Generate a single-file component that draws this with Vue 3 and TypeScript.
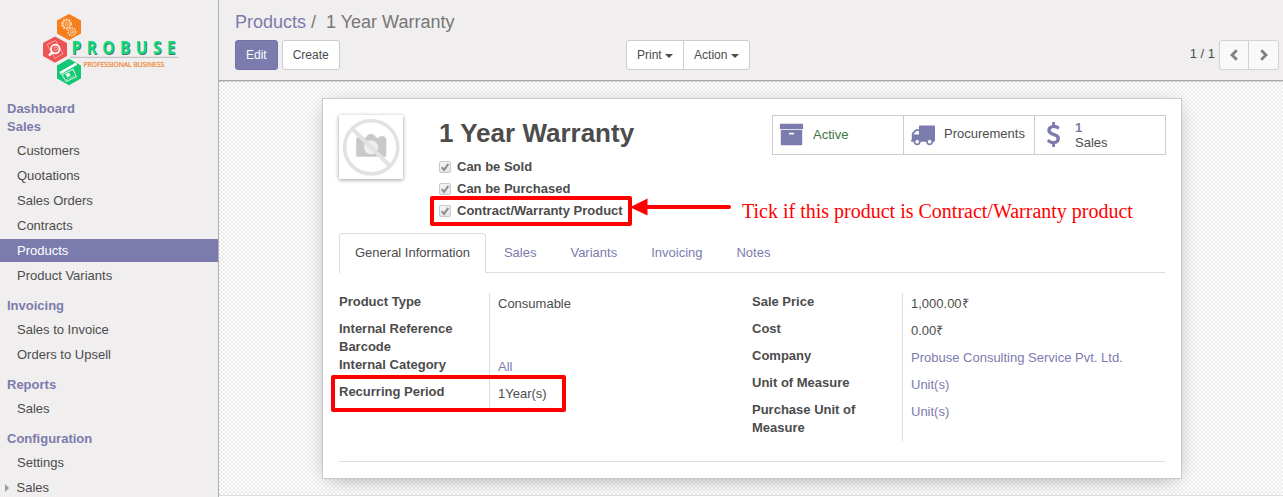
<script setup lang="ts">
interface MenuItem {
  label: string
  active?: boolean
  collapsed?: boolean
}
interface MenuSection {
  title: string
  items: MenuItem[]
}
interface Field {
  label: string
  value?: string
  link?: boolean
  tight?: boolean
}

const menu: MenuSection[] = [
  { title: 'Dashboard', items: [] },
  {
    title: 'Sales',
    items: [
      { label: 'Customers' },
      { label: 'Quotations' },
      { label: 'Sales Orders' },
      { label: 'Contracts' },
      { label: 'Products', active: true },
      { label: 'Product Variants' },
    ],
  },
  { title: 'Invoicing', items: [{ label: 'Sales to Invoice' }, { label: 'Orders to Upsell' }] },
  { title: 'Reports', items: [{ label: 'Sales' }] },
  { title: 'Configuration', items: [{ label: 'Settings' }, { label: 'Sales', collapsed: true }] },
]

const options = ['Can be Sold', 'Can be Purchased', 'Contract/Warranty Product']
const tabs = ['General Information', 'Sales', 'Variants', 'Invoicing', 'Notes']

const groups: Field[][] = [
  [
    { label: 'Product Type', value: 'Consumable' },
    { label: 'Internal Reference', tight: true },
    { label: 'Barcode', tight: true },
    { label: 'Internal Category', value: 'All', link: true },
    { label: 'Recurring Period', value: '1Year(s)' },
  ],
  [
    { label: 'Sale Price', value: '1,000.00₹' },
    { label: 'Cost', value: '0.00₹' },
    { label: 'Company', value: 'Probuse Consulting Service Pvt. Ltd.', link: true },
    { label: 'Unit of Measure', value: 'Unit(s)', link: true },
    { label: 'Purchase Unit of Measure', value: 'Unit(s)', link: true },
  ],
]

const archivePath =
  'M1088 832q0-26-19-45t-45-19h-256q-26 0-45 19t-19 45 19 45 45 19h256q26 0 45-19t19-45zm576-192v960q0 26-19 45t-45 19h-1408q-26 0-45-19t-19-45v-960q0-26 19-45t45-19h1408q26 0 45 19t19 45zm64-448v256q0 26-19 45t-45 19h-1536q-26 0-45-19t-19-45v-256q0-26 19-45t45-19h1536q26 0 45 19t19 45z'
const truckPath =
  'M640 1408q0-52-38-90t-90-38-90 38-38 90 38 90 90 38 90-38 38-90zm-384-512h384v-256h-158q-13 0-22 9l-195 195q-9 9-9 22v30zm1280 512q0-52-38-90t-90-38-90 38-38 90 38 90 90 38 90-38 38-90zm256-1088v1024q0 15-4 26.5t-13.5 18.5-16.5 11.5-23.5 6-22.5 2-25.5 0-22.5-.5q0 106-75 181t-181 75-181-75-75-181h-384q0 106-75 181t-181 75-181-75-75-181h-64q-3 0-22.5.5t-25.5 0-22.5-2-23.5-6-16.5-11.5-13.5-18.5-4-26.5q0-26 19-45t45-19v-320q0-8-.5-35t0-38 2.5-34.5 6.5-37 14-30.5 22.5-30l198-198q19-19 50.5-32t58.5-13h160v-192q0-26 19-45t45-19h1024q26 0 45 19t19 45z'
const dollarPath =
  'M1362 1185q0 153-99.5 263.5t-258.5 136.5v175q0 14-9 23t-23 9h-135q-13 0-22.5-9.5t-9.5-22.5v-175q-66-9-127.5-31t-101.5-44.5-74-48-46.5-37.5-17.5-18q-17-21-2-41l103-135q7-10 23-12 15-2 24 9l2 2q113 99 243 125 37 8 74 8 81 0 142.5-43t61.5-122q0-28-15-53t-33.5-42-58.5-37.5-66-32-80-32.5q-39-16-61.5-25t-61.5-26.5-62.5-31-56.5-35.5-53.5-42.5-43.5-49-35.5-58-21-66.5-8.5-78q0-138 98-242t255-134v-180q0-13 9.5-22.5t22.5-9.5h135q14 0 23 9t9 23v176q57 6 110.5 23t87 33.5 63.5 37.5 39 29 15 14q17 18 5 38l-81 146q-8 15-23 16-14 3-27-7-3-3-14.5-12t-39-26.5-58.5-32-74.5-26-85.5-11.5q-95 0-155 43t-60 111q0 26 8.5 48t29.5 41.5 39.5 33 56 31 60.5 27 70 27.5q53 20 81 31.5t76 35 75.5 42.5 62 50 53 63.5 31.5 76.5 13 94z'
</script>

<template>
  <div class="app">
    <aside class="sidebar">
      <svg class="logo" width="218" height="99" viewBox="0 0 218 99">
        <polygon points="69,14 81,20.5 81,33.5 69,40.3 57,33.5 57,20.5" fill="#f47f1c" />
        <polygon points="55,36.5 67,43 67,56 55,62.8 43,56 43,43" fill="#ee5454" />
        <polygon points="69,58.8 81,65.5 81,78.5 69,85.3 57,78.5 57,65.5" fill="#13c873" />
        <g fill="none" stroke="#fcd9b8">
          <circle cx="66.6" cy="24" r="4.6" stroke-width="1.8" stroke-dasharray="1.8 1.1" />
          <circle cx="66.6" cy="24" r="3.6" stroke-width="0.8" />
          <circle cx="66.6" cy="24" r="1.5" stroke-width="0.9" />
          <circle cx="71.8" cy="31.8" r="3.7" stroke-width="1.6" stroke-dasharray="1.5 0.9" />
          <circle cx="71.8" cy="31.8" r="1.5" stroke-width="1" />
        </g>
        <path d="M47 44.5l8.5-4 7.5 13-8 5z" fill="none" stroke="#f7a9a6" stroke-width="0.9" />
        <circle cx="55.3" cy="49" r="4.3" fill="#ee5454" stroke="#fff" stroke-width="1.7" />
        <circle cx="55.8" cy="48.6" r="1.8" fill="none" stroke="#f9b9b5" stroke-width="1" />
        <path d="M52.3 52.3l-3.4 3.2" stroke="#fff" stroke-width="2.4" />
        <path d="M60 73.2l16.5-9.5" stroke="#fff" stroke-width="2.6" />
        <path d="M62 74.8l11-5.5 3.3 7.4-10 4.8z" fill="none" stroke="#c7f2dd" stroke-width="1.1" />
        <path d="M65.5 74.2l3.6-1.8 1.6 3.2-3.6 1.8z" fill="#d8f7e8" />
        <path d="M66.5 79.5l7.5-3.6" stroke="#a8ebcb" stroke-width="0.8" />
        <path d="M70 57.3h108" stroke="#b9b7b7" stroke-width="1" />
        <g transform="translate(71.5 54) scale(0.84 1)">
          <text class="brand shade" x="0.8" y="1" textLength="124">PROBUSE</text>
          <text class="brand" x="0" y="0" textLength="124">PROBUSE</text>
        </g>
        <text class="tagline" x="83.5" y="67" textLength="81" lengthAdjust="spacingAndGlyphs">PROFESSIONAL BUSINESS</text>
      </svg>
      <nav class="menu">
        <section v-for="section in menu" :key="section.title" class="section">
          <div class="section-title">{{ section.title }}</div>
          <ul v-if="section.items.length" class="items">
            <li v-for="item in section.items" :key="item.label" :class="{ active: item.active, collapsed: item.collapsed }">
              {{ item.label }}
            </li>
          </ul>
        </section>
      </nav>
    </aside>

    <main class="main">
      <header class="control-panel">
        <div class="breadcrumb"><a>Products</a><span class="slash">/</span><span>1 Year Warranty</span></div>
        <div class="toolbar">
          <div class="left-buttons">
            <button class="btn primary">Edit</button>
            <button class="btn">Create</button>
          </div>
          <div class="btn-group">
            <button class="btn">Print<i class="caret"></i></button>
            <button class="btn">Action<i class="caret"></i></button>
          </div>
          <div class="pager">
            <span>1 / 1</span>
            <div class="btn-group pager-buttons">
              <button class="btn">
                <svg width="10" height="12" viewBox="0 0 10 12"><path d="M7.8 1.2L3 6l4.8 4.8" /></svg>
              </button>
              <button class="btn">
                <svg width="10" height="12" viewBox="0 0 10 12"><path d="M2.2 1.2L7 6l-4.8 4.8" /></svg>
              </button>
            </div>
          </div>
        </div>
      </header>

      <div class="canvas">
        <article class="sheet">
          <div class="head">
            <div class="avatar">
              <svg width="64" height="64" viewBox="0 0 64 64">
                <path d="M18.5 22.5h1v-1.3h3v1.3h4.5c1-2.6 2.7-3.6 5-3.6s4 1 5 3.6h3.5v-1.3h5v1.3h.5q1.3 0 1.3 1.3v16.7q0 1.3-1.3 1.3h-27.5q-1.3 0-1.3-1.3V23.8q0-1.3 1.3-1.3z" fill="#c9c9c9" />
                <circle cx="32" cy="32.3" r="7" fill="#eee" />
                <path d="M13 13.5l37.5 37" stroke="#e2e2e2" stroke-width="4" />
                <circle cx="32.2" cy="32.3" r="26.6" fill="none" stroke="#e2e2e2" stroke-width="3.6" />
              </svg>
            </div>
            <div class="title">
              <h1>1 Year Warranty</h1>
              <div v-for="option in options" :key="option" class="option">
                <span class="check">
                  <svg width="12" height="12" viewBox="0 0 12 12"><path d="M2.7 6.2l2.4 2.6 4.3-6" /></svg>
                </span>
                <span>{{ option }}</span>
              </div>
            </div>
            <div class="stats">
              <div class="stat">
                <svg width="25" height="25" viewBox="0 0 1792 1792"><path :d="archivePath" /></svg>
                <span class="green">Active</span>
              </div>
              <div class="stat">
                <svg width="25" height="25" viewBox="0 0 1792 1792"><path :d="truckPath" /></svg>
                <span class="procurements">Procurements</span>
              </div>
              <div class="stat">
                <svg width="25" height="25" viewBox="0 0 1792 1792"><path :d="dollarPath" /></svg>
                <span class="counter"><b>1</b>Sales</span>
              </div>
            </div>
          </div>

          <div class="tabs">
            <a v-for="(tab, i) in tabs" :key="tab" class="tab" :class="{ current: i === 0 }">{{ tab }}</a>
          </div>

          <div class="groups">
            <dl v-for="(fields, g) in groups" :key="g" class="group">
              <div v-for="field in fields" :key="field.label" class="field" :class="{ tight: field.tight }">
                <dt>{{ field.label }}</dt>
                <dd :class="{ link: field.link }">{{ field.value }}</dd>
              </div>
            </dl>
          </div>
          <div class="rule"></div>
        </article>
      </div>
      <div class="footer-edge"></div>
    </main>

    <div class="mark mark-option"></div>
    <div class="mark mark-period"></div>
    <svg class="arrow" width="102" height="18" viewBox="0 0 102 18">
      <path d="M16 9h83" stroke="#f00" stroke-width="4" stroke-linecap="round" />
      <path d="M0 9.3L17.5 0.5v17z" fill="#f00" />
    </svg>
    <div class="note">Tick if this product is Contract/Warranty product</div>
  </div>
</template>

<style>
body {
  margin: 0;
  overflow: hidden;
}
</style>

<style scoped>
.app {
  position: relative;
  display: flex;
  width: 1283px;
  height: 497px;
  overflow: hidden;
  font: 13px/18px "Liberation Sans", Arial, sans-serif;
  color: #4c4c4c;
  background: #fff;
}
.sidebar {
  box-sizing: border-box;
  width: 219px;
  flex: none;
  overflow: hidden;
  background: #f0eeee;
  border-right: 1px solid #afafb6;
}
.logo {
  display: block;
}
.brand {
  font: bold 18.5px "Open Sans", "Noto Sans", sans-serif;
  fill: #12d87d;
}
.brand.shade {
  fill: #4f7864;
}
.tagline {
  font: 7.6px "Open Sans", "Noto Sans", sans-serif;
  fill: #ee7f22;
  stroke: #ee7f22;
  stroke-width: 0.2px;
}
.section + .section {
  margin-top: 9px;
}
.section:nth-child(2) {
  margin-top: 0;
}
.menu {
  padding-top: 1px;
}
.section-title {
  padding-left: 7px;
  font-weight: bold;
  color: #7c7bad;
}
.items {
  display: flex;
  flex-direction: column;
  gap: 2px;
  margin: 0;
  padding: 3px 0 1px;
  list-style: none;
}
.items li {
  height: 23px;
  padding-left: 17px;
  line-height: 23px;
}
.items .active {
  background: #7c7bad;
  color: #fff;
}
.items .collapsed {
  display: flex;
  align-items: center;
  padding-left: 5px;
}
.collapsed::before {
  content: "";
  width: 0;
  margin-right: 7.5px;
  border: 4px solid transparent;
  border-left-color: #999;
  border-right: 0;
}
.main {
  display: flex;
  flex: 1;
  flex-direction: column;
  min-width: 0;
}
.control-panel {
  position: relative;
  box-sizing: border-box;
  height: 81px;
  padding: 9px 4px 0 16px;
  background: #f0eeee;
  border-bottom: 1px solid #a8a8a8;
  box-shadow: 0 1px 0 rgba(0, 0, 0, 0.14);
}
.breadcrumb {
  height: 31px;
  font-size: 18px;
  line-height: 26px;
  color: #777;
}
.breadcrumb a {
  color: #7c7bad;
}
.slash {
  margin: 0 10px 0 5px;
}
.toolbar {
  display: flex;
}
.left-buttons {
  display: flex;
  gap: 4px;
  width: 391px;
}
.btn {
  display: flex;
  align-items: center;
  box-sizing: border-box;
  height: 30px;
  margin: 0;
  padding: 0 10px;
  border: 1px solid #ccc;
  border-radius: 3px;
  background: #fff;
  color: #4c4c4c;
  font: 12px/18px "Liberation Sans", Arial, sans-serif;
}
.primary {
  border-color: #7371a8;
  background: #7c7bad;
  color: #fff;
}
.caret {
  margin: 2px 0 0 3.4px;
  border: 4px solid transparent;
  border-top-color: #4c4c4c;
  border-bottom: 0;
}
.btn-group {
  display: flex;
}
.btn-group .btn:first-child {
  border-radius: 3px 0 0 3px;
}
.btn-group .btn:last-child {
  margin-left: -1px;
  border-radius: 0 3px 3px 0;
}
.pager {
  display: flex;
  gap: 4px;
  margin-left: auto;
  line-height: 28px;
}
.pager-buttons .btn {
  justify-content: center;
  width: 30px;
  padding: 0;
  background: #f9f9f9;
  border-color: #d2d2d2;
}
.pager-buttons .btn:last-child {
  width: 31px;
}
.pager-buttons path {
  fill: none;
  stroke: #808080;
  stroke-width: 2.8;
}
.canvas {
  flex: 1;
  padding: 17px 101px 16px 103px;
  background: conic-gradient(#fff 25%, #ebebeb 0 50%, #fff 0 75%, #ebebeb 0) 0 0 / 4px 4px;
}
.sheet {
  box-sizing: border-box;
  height: 381px;
  padding: 16px;
  border: 1px solid #c8c8d3;
  background: #fff;
  box-shadow: 0 4px 18px -6px rgba(0, 0, 0, 0.38);
}
.head {
  display: flex;
  height: 118px;
}
.avatar {
  width: 64px;
  height: 64px;
  margin-right: 36px;
  box-shadow: 0 1px 4px rgba(0, 0, 0, 0.4);
}
.avatar svg {
  display: block;
}
h1 {
  margin: 1px 0 6px;
  font-size: 26px;
  line-height: 34px;
}
.option {
  display: flex;
  align-items: center;
  gap: 6px;
  height: 22px;
  font-weight: bold;
}
.check {
  box-sizing: border-box;
  width: 12px;
  height: 12px;
  border: 1px solid #c9c9c9;
  border-radius: 2px;
  background: linear-gradient(#f4f4f4, #e4e4e4);
}
.check svg {
  display: block;
  margin: -1px;
}
.check path {
  fill: none;
  stroke: #8e8e8e;
  stroke-width: 2;
}
.stats {
  display: flex;
  box-sizing: border-box;
  width: 394px;
  height: 40px;
  margin: 0 -1px 0 auto;
  border: 1px solid #ccc;
}
.stat {
  display: flex;
  align-items: center;
  box-sizing: border-box;
  width: 131px;
  padding: 0 0 1px 6px;
}
.stat:first-child {
  width: 130px;
}
.stat + .stat {
  border-left: 1px solid #ccc;
}
.stat svg {
  flex: none;
  fill: #7c7bad;
}
.stat span {
  margin-left: 9px;
}
.stat .green {
  color: #3c763d;
}
.stat .procurements {
  margin-top: -2px;
}
.stat .counter {
  display: flex;
  flex-direction: column;
  line-height: 15px;
}
.counter b {
  color: #7c7bad;
}
.tabs {
  display: flex;
  gap: 2px;
  height: 39px;
  border-bottom: 1px solid #ddd;
}
.tab {
  box-sizing: border-box;
  height: 40px;
  padding: 10px 15px;
  border: 1px solid transparent;
  border-bottom: 0;
  border-radius: 4px 4px 0 0;
  color: #7c7bad;
}
.current {
  border-color: #ddd;
  background: #fff;
  color: #4c4c4c;
}
.groups {
  display: flex;
  align-items: flex-start;
  height: 188px;
  padding-top: 20px;
  box-sizing: border-box;
}
.group {
  width: 413px;
  margin: 0;
}
.field {
  display: flex;
  min-height: 27px;
}
.field.tight {
  min-height: 18px;
}
dt {
  box-sizing: border-box;
  width: 151px;
  padding: 0 30px 0 0;
  border-right: 1px solid #ddd;
  font-weight: bold;
}
.field:last-child dt {
  padding-bottom: 4px;
}
dd {
  margin: 0;
  padding: 2px 0 0 8px;
}
.link {
  color: #7c7bad;
}
.rule {
  border-top: 1px solid #ddd;
}
.footer-edge {
  height: 1px;
  border-top: 1px solid #ddd;
  background: #fff;
}
.mark {
  position: absolute;
  box-sizing: border-box;
  border: 4px solid #f00;
  border-radius: 2px;
}
.mark-option {
  left: 430px;
  top: 196px;
  width: 202px;
  height: 30px;
}
.mark-period {
  left: 331px;
  top: 375px;
  width: 235px;
  height: 37px;
}
.arrow {
  position: absolute;
  left: 630px;
  top: 198px;
}
.note {
  position: absolute;
  left: 742px;
  top: 199px;
  font: 20px/24px "Liberation Serif", "Times New Roman", serif;
  white-space: nowrap;
  color: #f00;
}
</style>
